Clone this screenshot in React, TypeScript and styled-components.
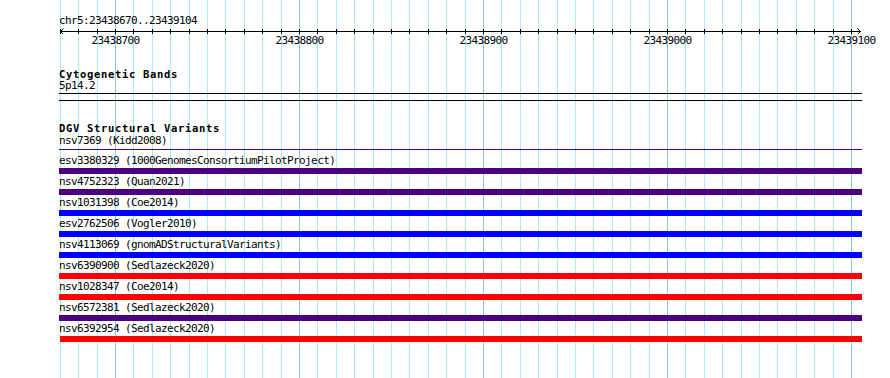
import React from "react";
import styled, { createGlobalStyle } from "styled-components";

const GlobalStyle = createGlobalStyle`
  html, body {
    margin: 0;
    padding: 0;
    background: #fff;
  }
  body {
    font-family: "DejaVu Sans Mono", monospace;
  }
`;

const REF_START = 23438670;
const REF_END = 23439104;
const WIDTH = 890;
const HEIGHT = 378;

// 100 bp = 184 px, 23438700 sits on pixel 115
const toX = (bp: number) => Math.round(115 + (bp - 23438700) * 1.84);

const tickBps: number[] = [];
for (let bp = REF_START; bp <= 23439100; bp += 10) tickBps.push(bp);
const majorBps = tickBps.filter((bp) => bp % 100 === 0);

type Feature = {
	name: string;
	source: string;
	color: "indigo" | "blue" | "red";
	offset?: number;
};

const features: Feature[] = [
	{ name: "esv3380329", source: "1000GenomesConsortiumPilotProject", color: "indigo" },
	{ name: "nsv4752323", source: "Quan2021", color: "indigo" },
	{ name: "nsv1031398", source: "Coe2014", color: "blue" },
	{ name: "esv2762506", source: "Vogler2010", color: "blue" },
	{ name: "nsv4113069", source: "gnomADStructuralVariants", color: "blue" },
	{ name: "nsv6390900", source: "Sedlazeck2020", color: "red" },
	{ name: "nsv1028347", source: "Coe2014", color: "red" },
	{ name: "nsv6572381", source: "Sedlazeck2020", color: "indigo" },
	{ name: "nsv6392954", source: "Sedlazeck2020", color: "red", offset: 1 },
];

const barColors = {
	indigo: "#4b0082",
	blue: "#0000ff",
	red: "#ff0000",
};

const Panel = styled.div`
  position: relative;
  width: ${WIDTH}px;
  height: ${HEIGHT}px;
  overflow: hidden;
  background: #fff;
`;

const GridLayer = styled.svg`
  position: absolute;
  top: 0;
  left: 0;
`;

const Content = styled.div`
  position: relative;
  padding-top: 14px;
  color: #000;
  font-family: "DejaVu Sans Mono", monospace;
  font-size: 11px;
  letter-spacing: -0.62px;
  line-height: 13px;
`;

const RulerTitle = styled.div`
  height: 13px;
  padding-left: 59px;
  white-space: nowrap;
`;

const Axis = styled.svg`
  display: block;
`;

const TickLabels = styled.div`
  position: relative;
  height: 13px;
`;

const TickLabel = styled.span`
  position: absolute;
  top: 0;
  transform: translateX(-50%);
  white-space: nowrap;
`;

const Track = styled.section`
  margin: 21px 0 0 59px;
  width: 803px;
`;

const TrackTitle = styled.div`
  height: 13px;
  font-size: 10.5px;
  font-weight: bold;
  letter-spacing: 0.68px;
  white-space: nowrap;
`;

const FeatureLabel = styled.div<{ $shift?: number }>`
  height: 13px;
  margin-top: ${({ $shift }) => $shift ?? 0}px;
  white-space: nowrap;
`;

const CytoBand = styled.div`
  box-sizing: border-box;
  height: 8px;
  margin-top: 1px;
  border-top: 1px solid #000;
  border-bottom: 1px solid #000;
`;

const ThinFeature = styled.div`
  height: 1px;
  margin: 2px 0 4px;
  background: ${barColors.indigo};
`;

const Rows = styled.div`
  display: flex;
  flex-direction: column;
`;

const Row = styled.div`
  display: flex;
  flex-direction: column;
`;

const Bar = styled.div<{ $color: Feature["color"]; $offset?: number }>`
  height: 6px;
  margin: 1px 0 1px ${({ $offset }) => $offset ?? 0}px;
  background: ${({ $color }) => barColors[$color]};
`;

const Grid = () => (
	<GridLayer width={WIDTH} height={HEIGHT}>
		{tickBps.map((bp) => (
			<rect
				key={bp}
				x={toX(bp)}
				y={0}
				width={1}
				height={HEIGHT}
				fill={bp % 100 === 0 ? "#8cc4e6" : "#a8ecf0"}
			/>
		))}
	</GridLayer>
);

const RulerAxis = () => (
	<Axis width={WIDTH} height={7}>
		<rect x={60} y={4} width={801} height={1} fill="#000" />
		{tickBps.map((bp) => (
			<rect key={bp} x={toX(bp)} y={2} width={1} height={5} fill="#000" />
		))}
		<path
			d="M63.5 1.5 L60.5 4.5 L63.5 7.5"
			fill="none"
			stroke="#000"
			strokeWidth={1}
		/>
		<path
			d="M857.5 1.5 L860.5 4.5 L857.5 7.5"
			fill="none"
			stroke="#000"
			strokeWidth={1}
		/>
	</Axis>
);

export default function App() {
	return (
		<>
			<GlobalStyle />
			<Panel>
				<Grid />
				<Content>
					<RulerTitle>
						chr5:{REF_START}..{REF_END}
					</RulerTitle>
					<RulerAxis />
					<TickLabels>
						{majorBps.map((bp) => (
							<TickLabel key={bp} style={{ left: toX(bp) + 0.5 }}>
								{bp}
							</TickLabel>
						))}
					</TickLabels>

					<Track>
						<TrackTitle>Cytogenetic Bands</TrackTitle>
						<FeatureLabel $shift={-2}>5p14.2</FeatureLabel>
						<CytoBand />
					</Track>

					<Track>
						<TrackTitle>DGV Structural Variants</TrackTitle>
						<FeatureLabel $shift={-1}>nsv7369 (Kidd2008)</FeatureLabel>
						<ThinFeature />
						<Rows>
							{features.map((f) => (
								<Row key={f.name}>
									<FeatureLabel>
										{f.name} ({f.source})
									</FeatureLabel>
									<Bar $color={f.color} $offset={f.offset} />
								</Row>
							))}
						</Rows>
					</Track>
				</Content>
			</Panel>
		</>
	);
}
